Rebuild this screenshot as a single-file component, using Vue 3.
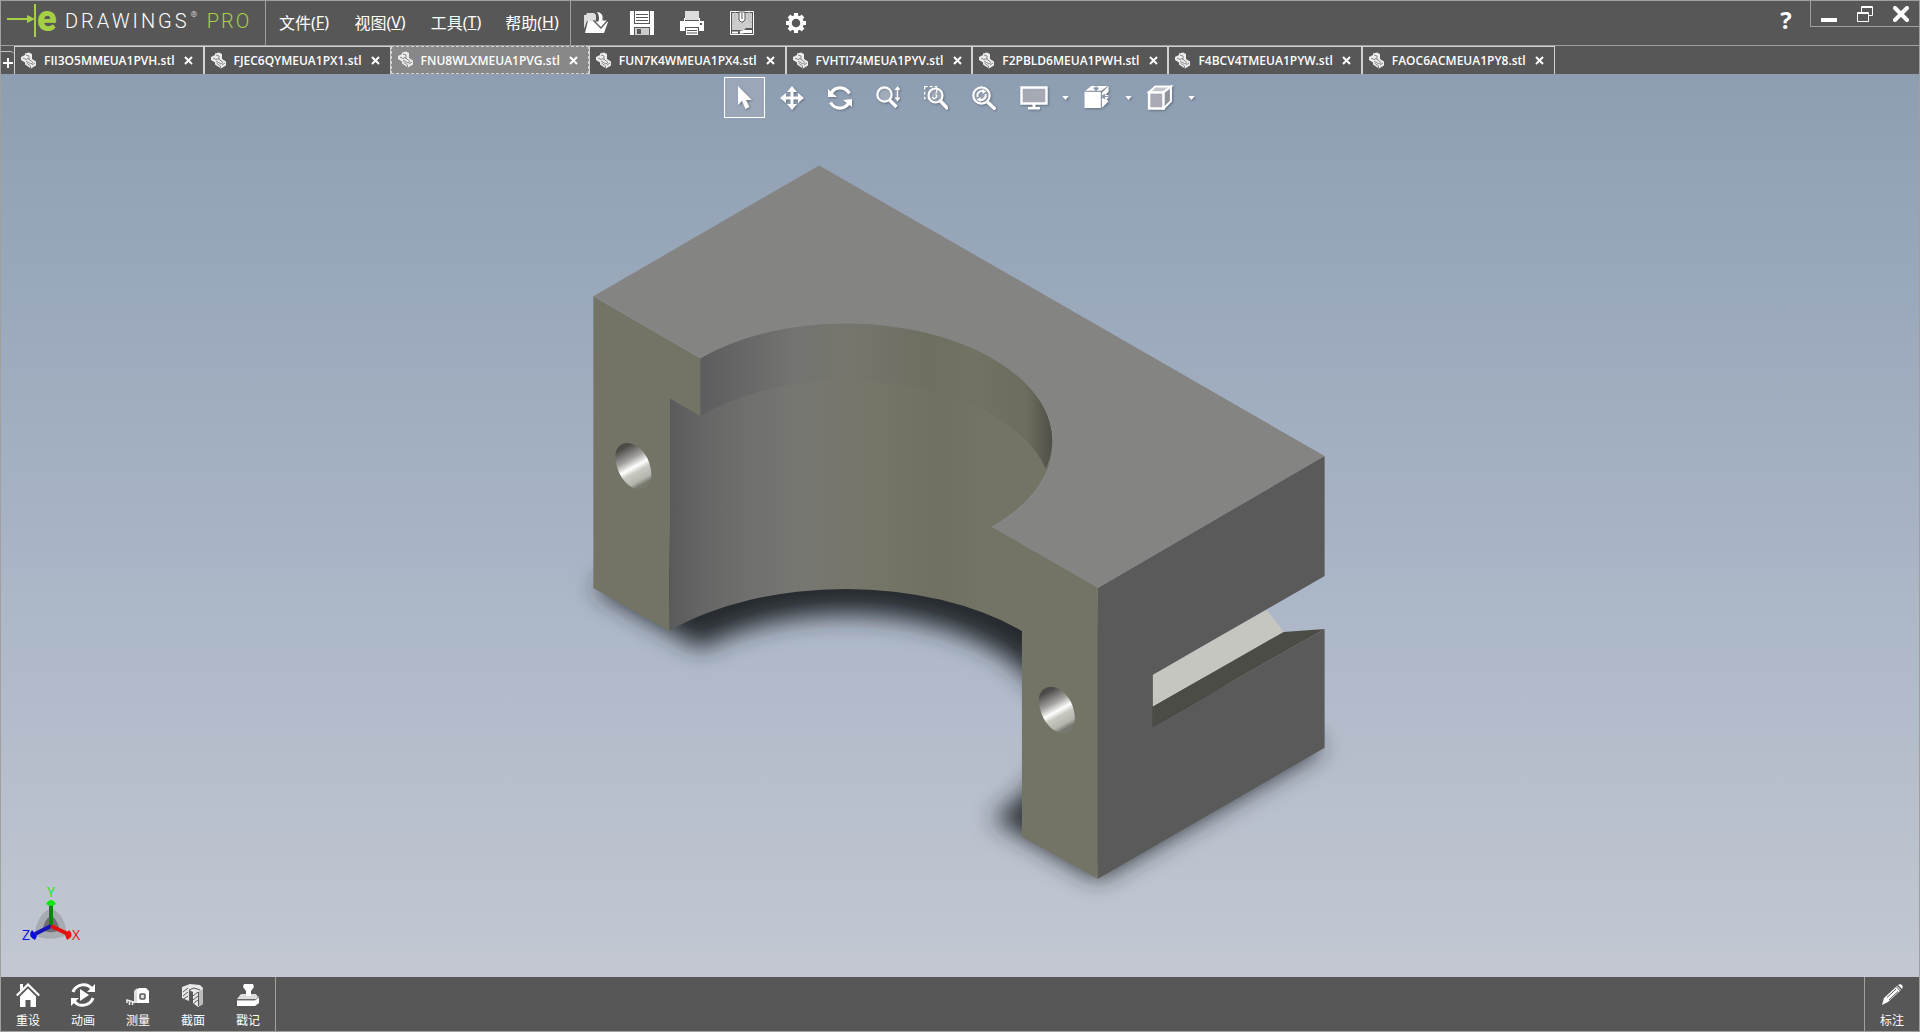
<script setup>
import { ref } from 'vue'

const menus = [
  { label: '文件', key: 'F' },
  { label: '视图', key: 'V' },
  { label: '工具', key: 'T' },
  { label: '帮助', key: 'H' },
]

const headerGroups = [
  [
    { icon: 'open', title: '打开' },
    { icon: 'save', title: '保存' },
  ],
  [{ icon: 'print', title: '打印' }],
  [{ icon: 'print3d', title: '3D 打印' }],
  [{ icon: 'gear', title: '选项' }],
]

const tabs = [
  'FII3O5MMEUA1PVH.stl',
  'FJEC6QYMEUA1PX1.stl',
  'FNU8WLXMEUA1PVG.stl',
  'FUN7K4WMEUA1PX4.stl',
  'FVHTI74MEUA1PYV.stl',
  'F2PBLD6MEUA1PWH.stl',
  'F4BCV4TMEUA1PYW.stl',
  'FAOC6ACMEUA1PY8.stl',
]
const activeTab = ref(2)

const viewTools = [
  { icon: 'cursor', title: '选择' },
  { icon: 'move', title: '平移' },
  { icon: 'rotate', title: '旋转' },
  { icon: 'zoom', title: '缩放' },
  { icon: 'zoomarea', title: '局部放大' },
  { icon: 'zoomfit', title: '整屏显示' },
]
const activeTool = ref('cursor')

const displayTools = [
  { icon: 'monitor', title: '显示' },
  { icon: 'orient', title: '视图定向' },
  { icon: 'cube', title: '显示样式' },
]

const actions = [
  { icon: 'home', label: '重设' },
  { icon: 'play', label: '动画' },
  { icon: 'measure', label: '测量' },
  { icon: 'section', label: '截面' },
  { icon: 'stamp', label: '戳记' },
]
</script>

<template>
  <div class="app">
    <svg class="sprite" aria-hidden="true">
      <symbol id="i-open" viewBox="0 0 24 24">
        <path d="M0 4h2l1-2h7l2 2v6H3L0 18z" fill="#ddd" />
        <path d="M4 10h18l2 1-4 11H1z" fill="#fff" />
        <path d="M12 0c6 1 8 4 7 9h5l-7 8-7-7h4c1-4 0-7-2-10z" fill="#fff" stroke="#575757" stroke-width="1.2" />
      </symbol>
      <symbol id="i-save" viewBox="0 0 24 24">
        <path d="M0 0h24v24H0z" fill="#fff" />
        <path d="M4 0h16v13H4z" fill="#575757" />
        <path d="M5 0h14v12H5z" fill="#fff" />
        <path d="M6 3.500h12M6 6.500h12M6 9.500h12" stroke="#575757" />
        <path d="M4 16h16v8H4z" fill="#575757" />
        <path d="M5 17h14v7H5z" fill="#ccc" />
        <path d="M7 18h4v5H7z" fill="#575757" />
      </symbol>
      <symbol id="i-print" viewBox="0 0 24 24">
        <path d="M5 0h14v9H5z" fill="#ddd" />
        <path d="M4 7h1v3h14V7h1v3h4v10h-5v-4H5v4H0V10h4z" fill="#fff" />
        <path d="M6 17h12v7H6z" fill="#fff" />
        <path d="M7 19.500h10M7 22h10" stroke="#575757" />
        <path d="M20 12h2v2h-2z" fill="#575757" />
      </symbol>
      <symbol id="i-print3d" viewBox="0 0 24 24">
        <path d="M.5 .5h23v23H.5z" fill="#575757" stroke="#fff" />
        <path d="M2 2h20v15h-6l-2 2H2z" fill="#ccc" />
        <path d="M5 1v8l-3 3M19 1v8l3 3" fill="none" stroke="#bbb" />
        <path d="M9 1h6v8l-2 2h-2L9 9z" fill="#fff" stroke="#575757" />
        <path d="M12 2v6" stroke="#575757" />
        <path d="M2 21.500h6" stroke="#fff" stroke-width="2" />
        <path d="M10 21.500l4-1h8" fill="none" stroke="#fff" stroke-width="3" />
      </symbol>
      <symbol id="i-gear" viewBox="0 0 24 24">
        <circle cx="12" cy="12" r="6" fill="none" stroke="#fff" stroke-width="3.500" />
        <path d="M12 2v4M12 18v4M2 12h4M18 12h4M5 5l3 3M16 16l3 3M19 5l-3 3M8 16l-3 3" stroke="#fff" stroke-width="4" />
      </symbol>
      <symbol id="i-part" viewBox="0 0 18 18">
        <path d="M1 5l4-2V1.500l4-1 3 1.500v5l4 2.500v4l-5 3-6-4v-2L1 8z" fill="#ececec" />
        <path d="M3 6l3 1.500 2-1 5 4-2 1.500-5-3M6 3l3 1v4M6.500 11l4 3v2M12 13l3-2" fill="none" stroke="#8a8a8a" />
      </symbol>
      <symbol id="i-close" viewBox="0 0 16 16">
        <path d="M2 2l12 12M14 2L2 14" stroke="#fff" stroke-width="4" stroke-linecap="round" />
      </symbol>
      <symbol id="i-restore" viewBox="0 0 16 16">
        <path d="M4.500 .5h11v9h-11zM4 1.500h12" fill="#575757" stroke="#fff" />
        <path d="M.5 6.500h11v9H.5zM0 7.500h12" fill="#575757" stroke="#fff" />
      </symbol>
      <symbol id="i-min" viewBox="0 0 16 16">
        <path d="M0 12h16v4H0z" fill="#fff" />
      </symbol>
      <symbol id="i-cursor" viewBox="0 0 24 24">
        <path d="M6 0v19l4-4 3.500 8 4-2-3.500-7h6z" fill="#fff" />
      </symbol>
      <symbol id="i-move" viewBox="0 0 24 24">
        <path d="M12 0l5 6h-3.500v4.500H18V7l6 5-6 5v-3.500h-4.500V18H17l-5 6-5-6h3.500v-4.500H6V17l-6-5 6-5v3.500h4.500V6H7z" fill="#fff" />
      </symbol>
      <symbol id="i-rotate" viewBox="0 0 24 24">
        <path d="M3 7.500C7 0 17 0 21.500 7.500M21 16.500C17 24 7 24 2.500 16.500" fill="none" stroke="#fff" stroke-width="3.200" />
        <path d="M0 3v8h9zM24 13v8l-9-7z" fill="#fff" />
      </symbol>
      <symbol id="i-zoom" viewBox="0 0 24 24">
        <circle cx="8.500" cy="8.500" r="7.200" fill="#fff" fill-opacity=".22" stroke="#fff" stroke-width="2.200" />
        <path d="M13.500 14l7 7" stroke="#fff" stroke-width="3.400" />
        <path d="M21.500 2.500v11" stroke="#fff" stroke-width="1.500" />
        <path d="M21.500 0l3 4h-6zM21.500 15.500l3-4h-6z" fill="#fff" />
      </symbol>
      <symbol id="i-zoomarea" viewBox="0 0 24 24">
        <path d="M.7 .7h12v12H.7z" fill="none" stroke="#fff" stroke-width="1.300" stroke-dasharray="3 2" />
        <circle cx="11.500" cy="9.500" r="7" fill="#fff" fill-opacity=".2" stroke="#fff" stroke-width="2.200" />
        <path d="M8 11.500h4V6" fill="none" stroke="#fff" stroke-dasharray="2 1" />
        <path d="M16.500 15l7.500 8" stroke="#fff" stroke-width="3.400" />
      </symbol>
      <symbol id="i-zoomfit" viewBox="0 0 24 24">
        <circle cx="9.500" cy="9.500" r="8.200" fill="#fff" fill-opacity=".15" stroke="#fff" stroke-width="2.200" />
        <path d="M5.500 11A4.500 4.500 0 0 1 11 5.300M13.500 8A4.500 4.500 0 0 1 8 13.700" fill="none" stroke="#fff" stroke-width="2" />
        <path d="M10.500 3l4 2.500-4 2.500zM8.500 16l-4-2.500 4-2.500z" fill="#fff" />
        <path d="M15.500 16l8 7.500" stroke="#fff" stroke-width="3.400" />
      </symbol>
      <symbol id="i-monitor" viewBox="0 0 28 24">
        <path d="M1.500 2h25v16h-25z" fill="#b9b9c2" fill-opacity=".75" stroke="#fff" stroke-width="2.400" />
        <path d="M12.500 18h3v4h-3zM8 21.500h12V24H8z" fill="#fff" />
      </symbol>
      <symbol id="i-orient" viewBox="0 0 26 26">
        <path d="M0 7h17v17H0zM1 6l6-5h17l-6 5z" fill="#fff" />
        <path d="M18 8l7-7v6l-3 3 3 1v2l-2 2 2 2-7 7z" fill="#fff" />
        <path d="M12 0v3M9.500 3h5L12 6zM25 12h-4M21 9.500v5L17.500 12z" fill="#8796aa" stroke="#8796aa" />
      </symbol>
      <symbol id="i-cube" viewBox="0 0 24 24">
        <path d="M1.500 7h14v15.500h-14z" fill="#a9a9b5" stroke="#fff" stroke-width="2.400" />
        <path d="M1.500 7l6-5.500h15L15.500 7z" fill="#c3c6cc" stroke="#fff" stroke-width="2" />
        <path d="M15.500 22.500V7l7-5.500v14z" fill="#8d929c" stroke="#fff" stroke-width="2" />
      </symbol>
      <symbol id="i-home" viewBox="0 0 24 24">
        <path d="M4 1h3v4L4 8z" fill="#fff" />
        <path d="M.8 12.500L12 1.500l11.200 11" fill="none" stroke="#fff" stroke-width="2.200" />
        <path d="M12 5.500l8 8V24h-5.500v-7h-5v7H4V13.500z" fill="#fff" />
      </symbol>
      <symbol id="i-play" viewBox="0 0 24 24">
        <path d="M2 9C5 1 16-1 21 6M22 15c-3 8-14 10-19 3" fill="none" stroke="#fff" stroke-width="3" />
        <path d="M24 1v8h-8zM0 23v-8h8z" fill="#fff" />
        <path d="M9 6l9 6-9 6z" fill="#fff" />
      </symbol>
      <symbol id="i-measure" viewBox="0 0 24 24">
        <path d="M10 7l3-2h7l3 3v12H10z" fill="#fff" />
        <path d="M8 8l3-3v15H8z" fill="#ddd" />
        <rect x="14" y="11" width="5" height="5" rx="1" fill="#ddd" stroke="#575757" stroke-width="1.500" />
        <path d="M9 19.500L1 17v3M3.500 18v4M6.500 19v3" fill="none" stroke="#eee" stroke-width="1.500" />
      </symbol>
      <symbol id="i-section" viewBox="0 0 24 24">
        <path d="M1 4l8-3 10 1 3 3v16l-5 3-5-4V9L8 7v11l-7-3z" fill="#e8e8e8" />
        <path d="M2 9l5-4M2 13l5-4M2.500 16L7 13M12 13l5-4M12 17l5-4M13 20l4-3M8 7l5-2 6 2M17.500 9v14" fill="none" stroke="#575757" />
        <path d="M18 8l4-2v15l-4 2z" fill="#bbb" />
      </symbol>
      <symbol id="i-stamp" viewBox="0 0 24 24">
        <path d="M8 1h9l1 3-3 4v5h-5V8L7 4z" fill="#fff" />
        <path d="M5 11h15l3 5H1z" fill="#ddd" />
        <path d="M1 17h18l4-4v7l-4 3H1z" fill="#fff" />
        <path d="M1 17h18l4-3" fill="none" stroke="#777" />
        <path d="M10 8h5v5h-5z" fill="#fff" />
      </symbol>
      <symbol id="i-pencil" viewBox="0 0 24 24">
        <path d="M2 22l2-7L17 3l4 4L8 19z" fill="#fff" />
        <path d="M18 2c3-2 6 1 4 4z" fill="#fff" />
        <path d="M16.500 4l4 4M7 14.500l9-8.500M9 17l9-8.500" stroke="#575757" />
      </symbol>
    </svg>

    <header class="topbar">
      <div class="brand">
        <svg class="mark" viewBox="0 0 30 34" aria-hidden="true">
          <path d="M0 16h24" stroke="#a5cf45" stroke-width="2" />
          <path d="M20 12l8 4-8 4z" fill="#a5cf45" />
          <path d="M28 1v33" stroke="#a5cf45" stroke-width="2" />
        </svg>
        <span class="e">e</span>
        <span class="word">DRAWINGS</span>
        <span class="reg">®</span>
        <span class="pro">PRO</span>
      </div>
      <nav class="menus">
        <button v-for="m in menus" :key="m.key" type="button">{{ m.label }}(<u>{{ m.key }}</u>)</button>
      </nav>
      <div class="quick">
        <div v-for="(g, i) in headerGroups" :key="i" class="quick-group">
          <button v-for="b in g" :key="b.icon" type="button" :aria-label="b.title">
            <svg width="24" height="24"><use :href="'#i-' + b.icon" /></svg>
          </button>
        </div>
      </div>
      <button class="help" type="button">?</button>
      <div class="window-controls">
        <button v-for="w in ['min', 'restore', 'close']" :key="w" type="button" :aria-label="w">
          <svg width="16" height="16"><use :href="'#i-' + w" /></svg>
        </button>
      </div>
    </header>

    <div class="tabs">
      <button class="add" type="button" aria-label="新建">
        <svg width="10" height="10" viewBox="0 0 10 10"><path d="M5 0v10M0 5h10" stroke="#fff" stroke-width="2" /></svg>
      </button>
      <div v-for="(t, i) in tabs" :key="t" class="tab" :class="{ active: i === activeTab }">
        <button class="name" type="button" @click="activeTab = i">
          <svg width="18" height="18"><use href="#i-part" /></svg>
          <span>{{ t }}</span>
        </button>
        <button class="close" type="button" aria-label="关闭">
          <svg width="9" height="9" viewBox="0 0 9 9"><path d="M1 1l7 7M8 1L1 8" stroke="#fff" stroke-width="2" /></svg>
        </button>
      </div>
    </div>

    <main class="viewport">
      <svg class="model" viewBox="0 74 1920 903" preserveAspectRatio="xMidYMid meet" role="img" aria-label="模型">
        <defs>
          <linearGradient id="bore" gradientUnits="userSpaceOnUse" x1="669" y1="0" x2="1051" y2="0">
            <stop offset="0" stop-color="#5a5a5b" />
            <stop offset=".08" stop-color="#656565" />
            <stop offset=".2" stop-color="#6f6f6d" />
            <stop offset=".35" stop-color="#777772" />
            <stop offset=".53" stop-color="#757568" />
            <stop offset=".72" stop-color="#6f6f62" />
            <stop offset=".82" stop-color="#737466" />
            <stop offset="1" stop-color="#737466" />
          </linearGradient>
          <linearGradient id="lip" gradientUnits="userSpaceOnUse" x1="700" y1="0" x2="1051" y2="0">
            <stop offset="0" stop-color="#5d5d5f" />
            <stop offset=".14" stop-color="#686868" />
            <stop offset=".26" stop-color="#737371" />
            <stop offset=".42" stop-color="#76766d" />
            <stop offset=".64" stop-color="#6e6e61" />
            <stop offset=".78" stop-color="#727264" />
            <stop offset=".93" stop-color="#6d6d5f" />
            <stop offset="1" stop-color="#515148" />
          </linearGradient>
          <linearGradient id="hole" gradientUnits="userSpaceOnUse" x1="-10" y1="-18" x2="10" y2="18">
            <stop offset="0" stop-color="#4c4b47" />
            <stop offset=".32" stop-color="#a3a29e" />
            <stop offset=".53" stop-color="#ffffff" />
            <stop offset=".66" stop-color="#c9c9c3" />
            <stop offset=".88" stop-color="#b4b5ac" />
            <stop offset="1" stop-color="#77786e" />
          </linearGradient>
          <filter id="soft" x="-10%" y="-10%" width="120%" height="120%">
            <feGaussianBlur stdDeviation="12" />
          </filter>
        </defs>

        <path d="M593 588L700 649A205 118 0 0 1 992 818L1098 879L1324 748L819 456z" fill="#26292d" filter="url(#soft)" />

        <!-- bore walls and front faces -->
        <path d="M669 380L700 358A205 118 0 0 1 992 527L1022 540V631A250 144 0 0 0 669 631z" fill="url(#bore)" />
        <path d="M700 358A205 118 0 0 1 1046 469A205 118 0 0 0 700 416z" fill="url(#lip)" />
        <path d="M593 296L700 358V416L669 398V631L593 588z" fill="#737466" />
        <path d="M992 527L1098 587V879L1022 837V631L992 612z" fill="#737466" />

        <!-- top -->
        <path d="M819 165L1325 456L1098 588L992 527A205 118 0 0 0 700 358L593 296z" fill="#848482" />

        <!-- side with its slot -->
        <path d="M1098 588L1325 456V576L1153 675V727L1325 629V748L1098 879z" fill="#5a5a5a" />
        <path d="M1153 675L1267 610L1284 632L1153 707z" fill="#c5c6c0" />
        <path d="M1153 707L1284 632L1325 629L1153 727z" fill="#4b4c45" />

        <!-- screw holes -->
        <g v-for="p in [[633, 466], [1057, 710]]" :key="p[0]" :transform="`translate(${p[0]} ${p[1]})`">
          <path d="M-18 -10C-18 -22 -7 -27 3 -20C12 -15 18 -3 18 9C18 22 8 27 -2 21C-12 15 -18 2 -18 -10z" fill="url(#hole)" />
        </g>
      </svg>

      <div class="viewbar">
        <button
          v-for="t in viewTools"
          :key="t.icon"
          type="button"
          :class="{ active: t.icon === activeTool }"
          :aria-label="t.title"
          @click="activeTool = t.icon"
        >
          <svg width="26" height="26"><use :href="'#i-' + t.icon" width="24" height="24" x="1" y="1" /></svg>
        </button>
        <div class="display">
          <div v-for="t in displayTools" :key="t.icon" class="split">
            <button type="button" :aria-label="t.title">
              <svg width="28" height="26"><use :href="'#i-' + t.icon" width="28" height="25" /></svg>
            </button>
            <button class="caret" type="button" :aria-label="t.title + '选项'">
              <svg width="7" height="4" viewBox="0 0 8 5"><path d="M0 0h8L4 5z" fill="#fff" /></svg>
            </button>
          </div>
        </div>
      </div>

      <svg class="triad" width="70" height="70" viewBox="16 880 70 70" aria-hidden="true">
        <path d="M51 909C62 914 67 926 66 936C57 941 44 941 35 936C35 926 40 914 51 909z" fill="#777" fill-opacity=".35" />
        <path d="M51 917C56 919 59 926 59 931C54 934 48 934 43 931C43 926 46 919 51 917z" fill="#333" fill-opacity=".5" />
        <path d="M51 927V905" stroke="#078a07" stroke-width="4" />
        <path d="M46 905Q51 897 56 905Q51 909 46 905z" fill="#0fe80f" />
        <path d="M51 927L35 935" stroke="#1414b8" stroke-width="4" />
        <path d="M32 931Q27 937 35 941L37 937z" fill="#0a0ae6" />
        <path d="M51 927L68 935" stroke="#e01010" stroke-width="4" />
        <path d="M69 931Q75 937 67 941L65 936z" fill="#f40c0c" />
        <text x="51" y="898" fill="#12e812">Y</text>
        <text x="76" y="941" fill="#e81010">X</text>
        <text x="26" y="941" fill="#1010e0">Z</text>
      </svg>
    </main>

    <footer class="bottombar">
      <div class="actions">
        <button v-for="a in actions" :key="a.icon" type="button">
          <svg width="24" height="24"><use :href="'#i-' + a.icon" /></svg>
          <span>{{ a.label }}</span>
        </button>
      </div>
      <div class="markup">
        <button type="button">
          <svg width="24" height="24"><use href="#i-pencil" /></svg>
          <span>标注</span>
        </button>
      </div>
    </footer>
  </div>
</template>

<style>
body {
  margin: 0;
}
</style>

<style scoped>
.app {
  display: flex;
  flex-direction: column;
  min-height: 100vh;
  box-sizing: border-box;
  border: 1px solid #a0a19f;
  background: #575757;
  color: #fff;
  font-family: "Open Sans", "Noto Sans CJK SC", sans-serif;
}
.sprite {
  position: absolute;
  width: 0;
  height: 0;
}
button {
  display: flex;
  align-items: center;
  justify-content: center;
  margin: 0;
  padding: 0;
  border: 0;
  background: none;
  color: inherit;
  font: inherit;
}
svg {
  display: block;
  flex: none;
}

.topbar {
  display: flex;
  height: 44px;
  border-bottom: 1px solid #a0a19f;
}
.brand {
  display: flex;
  align-items: center;
  box-sizing: border-box;
  width: 265px;
  padding: 0 0 4px 6px;
  border-right: 1px solid #a0a19f;
  font-family: Roboto, sans-serif;
  font-size: 20px;
  line-height: 40px;
  font-weight: 300;
}
.mark {
  width: 30px;
  height: 34px;
  margin-bottom: 2px;
}
.e {
  width: 28px;
  padding-bottom: 4px;
  color: #a5cf45;
  font-family: Roboto, sans-serif;
  font-size: 36px;
  line-height: 36px;
  font-weight: 900;
}
.word {
  letter-spacing: 3px;
}
.reg {
  width: 16px;
  padding-left: 1px;
  font-size: 8px;
  line-height: 28px;
  align-self: flex-start;
}
.pro {
  color: #a5cf45;
  letter-spacing: 2px;
}
.menus {
  display: flex;
  border-right: 1px solid #a0a19f;
}
.menus button {
  width: 76px;
  padding-bottom: 2px;
  font-family: "Noto Sans", "Noto Sans CJK SC", sans-serif;
  font-size: 16px;
}
.quick {
  display: flex;
  gap: 4px;
  padding-left: 2px;
}
.quick-group {
  display: flex;
}
.quick-group:last-child {
  margin-left: 4px;
}
.quick button {
  width: 46px;
}
.help {
  width: 48px;
  margin-left: auto;
  padding-bottom: 8px;
  font-size: 24px;
  font-weight: 700;
}
.window-controls {
  display: flex;
  height: 25px;
  border: solid #a0a19f;
  border-width: 0 0 1px 1px;
}
.window-controls button {
  width: 36px;
}

.tabs {
  display: flex;
  height: 28px;
  font-size: 12px;
  font-weight: 600;
}
.add {
  width: 13px;
  height: 23px;
  align-self: flex-end;
  border-top: 1px solid #c4c4c4;
  border-radius: 0 4px 0 0;
}
.tab {
  display: flex;
  box-sizing: border-box;
  border: 1px solid #d2d2d2;
  border-bottom: 0;
}
.tab.active {
  border: 1px dashed #d2d2d2;
  background: #888;
}
.name {
  gap: 6px;
  padding-left: 5px;
}
.close {
  width: 28px;
}

.viewport {
  position: relative;
  flex: 1;
  min-height: 400px;
  background: linear-gradient(#8e9eb2, #a7b3c5 50%, #c3c8d2);
}
.model {
  position: absolute;
  inset: 0;
  width: 100%;
  height: 100%;
}
.viewbar {
  position: absolute;
  top: 3px;
  left: 0;
  right: 0;
  display: flex;
  justify-content: center;
  gap: 7px;
  padding-left: 6px;
}
.viewbar svg {
  filter: drop-shadow(1px 1px 1px rgba(70, 80, 95, 0.6));
}
.viewbar button {
  box-sizing: border-box;
  width: 41px;
  height: 41px;
}
.viewbar .active {
  border: 1px solid #fff;
  background: #9ba7b8;
}
.display,
.split {
  display: flex;
}
.display {
  margin-left: 2px;
}
.viewbar .caret {
  width: 22px;
}
.triad {
  position: absolute;
  left: 15px;
  bottom: 28px;
}
.triad text {
  font-family: "Open Sans", sans-serif;
  font-size: 14px;
  text-anchor: middle;
}

.bottombar {
  display: flex;
  justify-content: space-between;
  height: 54px;
}
.actions {
  display: flex;
  gap: 1px;
  border-right: 1px solid #a0a19f;
}
.markup {
  display: flex;
  border-left: 1px solid #a0a19f;
}
.bottombar button {
  flex-direction: column;
  gap: 6px;
  width: 54px;
  padding-top: 4px;
  font-size: 12px;
  line-height: 16px;
}
</style>
